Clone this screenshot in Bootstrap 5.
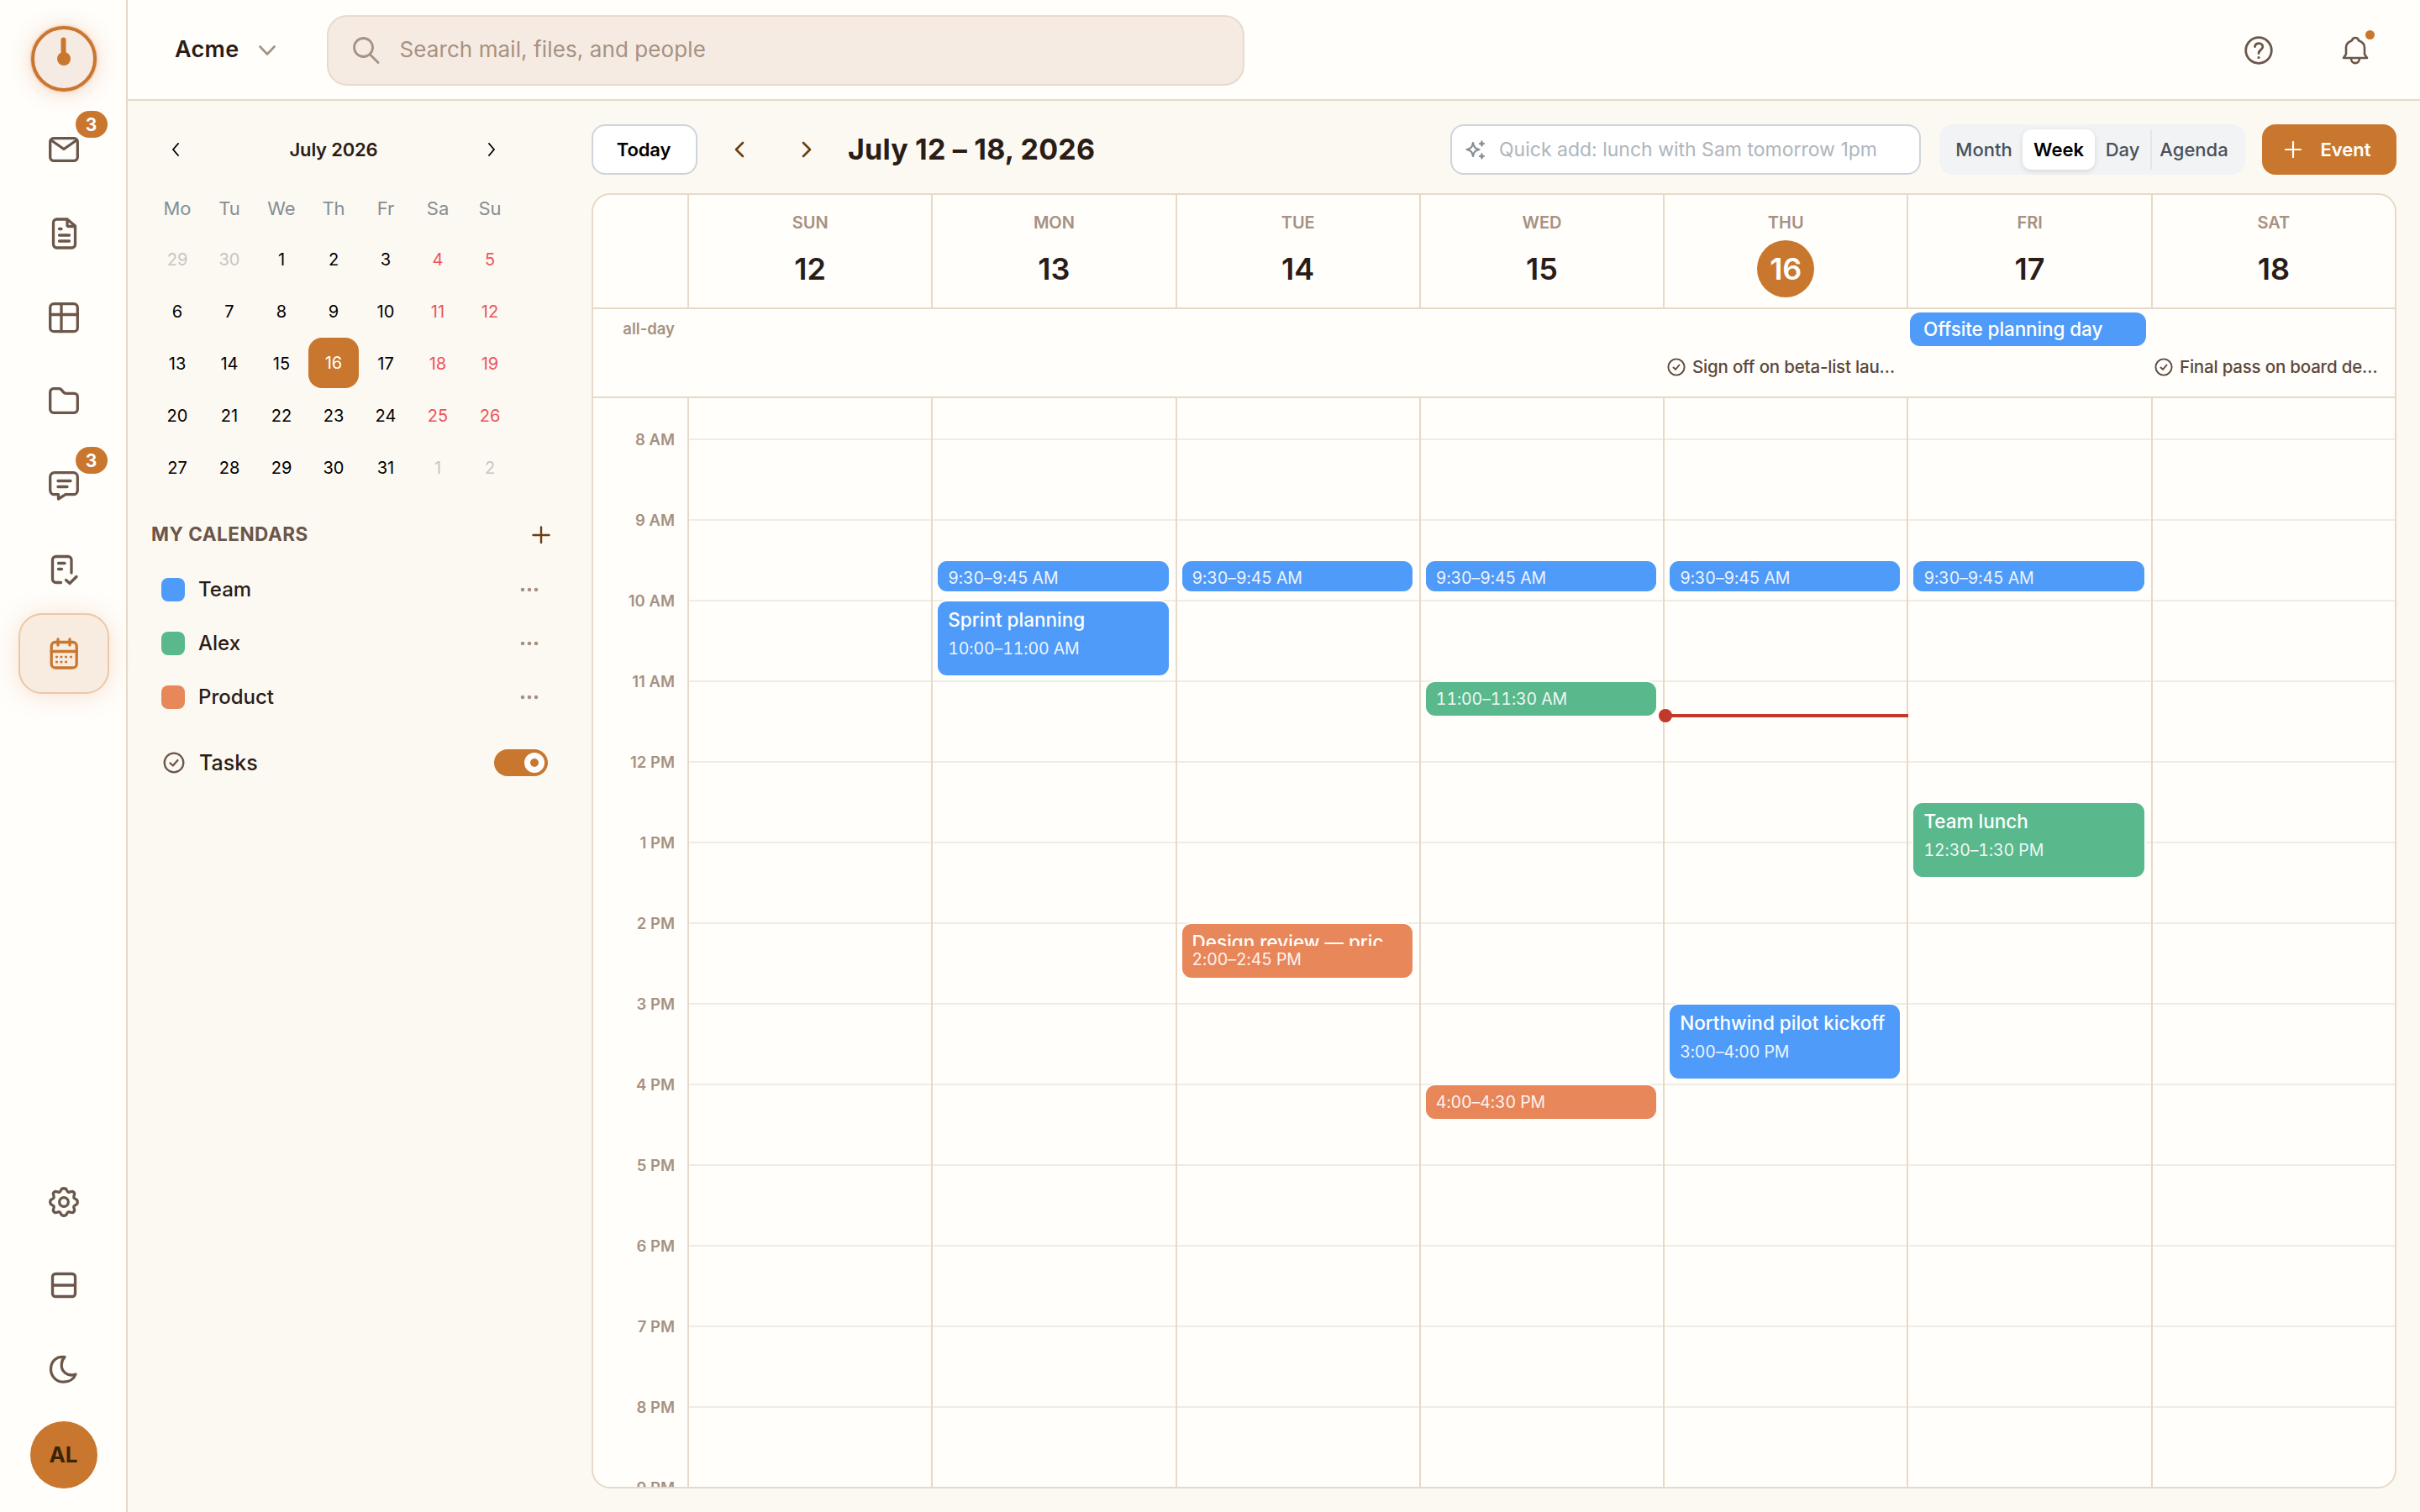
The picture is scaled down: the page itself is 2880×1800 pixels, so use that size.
<!DOCTYPE html>
<html lang="en">
<head>
<meta charset="utf-8">
<meta name="viewport" content="width=device-width, initial-scale=1">
<title>Acme Calendar</title>
<link href="https://cdn.jsdelivr.net/npm/bootstrap@5.3.0/dist/css/bootstrap.min.css" rel="stylesheet">
<style>
:root{--accent:#c9772e;--ink:#2a1c16;--brown:#6b564a;--muted:#a69182;--line:#e7d9c7;--paper:#fffefb;--canvas:#fcf9f3}
body{font-family:Inter,"Liberation Sans",sans-serif;font-size:22px;line-height:1;color:var(--ink);background:var(--canvas)}
svg{display:block;flex:none;fill:none;stroke:currentColor;stroke-linecap:round;stroke-linejoin:round}
.app-shell{width:2880px;height:1800px}
/* icon rail */
.rail{width:152px;background:var(--paper);border-right:2px solid var(--line);padding:31px 0 28px 1px;color:var(--brown)}
.brand-dial{width:78px;height:78px;border:4px solid var(--accent);background:#f6ebe3;box-shadow:0 2px 26px rgba(217,120,60,.3),0 0 3px rgba(217,120,60,.7);margin-bottom:21px;color:var(--accent)}
.rail-btn{width:108px;height:96px;border-radius:28px;border:2px solid transparent;margin-bottom:4px;color:var(--brown)}
.rail-btn.active{background:#f8ebe0;border-color:#ebc8a8;color:var(--accent);box-shadow:0 2px 30px rgba(217,120,60,.22)}
.rail-btn svg{stroke-width:3.3}
.count-pill{left:66px;top:0;width:38px;height:32px;border-radius:16px;background:var(--accent);color:#fff;font-size:21px;font-weight:700}
.avatar{width:80px;height:80px;background:var(--accent);color:#3a2408;font-size:26px;font-weight:700;margin-top:10px}
/* top bar */
.topbar{height:120px;background:var(--paper);border-bottom:2px solid var(--line);padding:1px 61px 0 56px}
.team-name{font-size:27px;font-weight:600;letter-spacing:.3px;margin-top:-2px}
.search-box{width:1092px;height:84px;border:2px solid #e8dace;border-radius:24px;background:#f5ebe3;color:var(--muted);font-size:26px;letter-spacing:.1px;padding-left:28px;margin-left:61px}
.search-box span{margin:-2px 0 0 22px}
.notice-dot{width:11px;height:11px;background:var(--accent);left:28px;top:-7px}
/* left panel */
.side-panel{width:552px;padding:28px 49px 0 28px}
.mini-cal{width:434px}
.mini-head{height:60px;font-weight:600;letter-spacing:-.2px;margin-bottom:8px}
.mini-grid{display:grid;grid-template-columns:repeat(7,62px);grid-auto-rows:62px;font-size:20px;color:#000}
.mini-grid span{display:flex;align-items:center;justify-content:center}
.mini-grid .wd{font-size:22px;color:#868e96;padding-top:2px}
.mini-grid .out{color:#c6c5c2}
.mini-grid .we{color:#ee5359}
.mini-grid .sel{background:var(--accent);color:#fff;border-radius:16px;margin:0 1px 2px}
.cal-title{height:40px;margin:28px 0 14px;font-size:22.5px;font-weight:700;letter-spacing:.5px;color:var(--brown)}
.cal-row{height:64px;font-size:24px;font-weight:500;padding-left:12px}
.swatch{width:28px;height:28px;border-radius:8px;margin-right:16px}
.dots{color:var(--muted);fill:currentColor;stroke:none;margin-right:14px}
.switch-on{width:64px;height:32px;border-radius:16px;background:var(--accent);padding-right:4px}
.switch-on i{width:24px;height:24px;border-radius:50%;background:var(--accent);border:7px solid #fff}
/* toolbar */
.main-area{padding:28px 28px 28px 0}
.tool-row{height:60px;margin-bottom:22px}
.today-btn{width:126px;border:2px solid #ced4da;border-radius:16px;background:#fff;color:#000;font-weight:600;margin-right:20px;letter-spacing:-.1px;padding-right:2px}
.step-btn{width:60px;margin-right:20px;color:#6b3f12}
.range-title{font-size:34px;font-weight:700;letter-spacing:.2px;margin-left:-1px}
.quick-add{width:560px;border:2px solid #ced4da;border-radius:16px;background:#fff;color:#adb5bd;font-size:23px;padding-left:15px;margin-right:22px}
.view-seg{width:364px;border-radius:16px;background:#f1f3f5;color:#495057;font-weight:500;padding:6px 8px 6px 7px;margin-right:20px}
.view-seg .on{background:#fff;color:#000;border-radius:10px;font-weight:600;box-shadow:0 2px 6px rgba(0,0,0,.12)}
.event-btn{width:160px;border-radius:16px;background:var(--accent);color:#fff;font-weight:600;padding-right:3px}
/* week grid */
.week-card{border:2px solid var(--line);border-radius:22px;background:var(--paper);overflow:hidden}
.gutter{width:114px;flex:none;border-right:2px solid var(--line);color:var(--muted);font-size:18.5px;font-weight:600}
.day-col{flex:1 1 0;min-width:0;border-right:2px solid var(--line)}
.day-col:last-child{border-right:0}
.head-row{height:136px;border-bottom:2px solid var(--line)}
.dow{height:30px;margin:18px 0 6px;font-size:20px;font-weight:600;color:var(--muted)}
.dnum{width:68px;height:68px;font-size:36px;font-weight:600}
.dnum.now{background:var(--accent);color:#fff}
.allday-row{height:106px;border-bottom:2px solid var(--line)}
.allday-row .gutter{border-color:transparent}
.allday-grid{display:grid;grid-template-columns:repeat(7,minmax(0,1fr));grid-template-rows:40px 40px;row-gap:5px;padding-top:4px}
.allday-ev{margin:0 6px 0 3px;border-radius:12px;background:#4f9bf9;color:#fff;font-size:22.5px;font-weight:500;padding-left:16px;letter-spacing:-.1px}
.allday-task{font-size:20.5px;font-weight:500;color:#5c483d;padding-left:4px;letter-spacing:-.2px;white-space:nowrap}
.hours div{height:96px;padding-right:15px;text-align:right;line-height:98px}
.days{background:repeating-linear-gradient(#efece4 0 2px,transparent 2px 96px) 0 48px/100% 1400px no-repeat}
.ev{position:absolute;left:6px;right:8px;border-radius:11px;color:#fff;padding:6px 12px 0;overflow:hidden;white-space:nowrap;box-shadow:0 0 0 2px var(--paper)}
.ev b{display:block;font-size:22.5px;font-weight:500;line-height:32px;height:34px;margin-bottom:2px;overflow:hidden}
.ev span{display:block;font-size:19.5px;line-height:29px;opacity:.9;font-variant-numeric:tabular-nums;letter-spacing:-.1px}
.blue{background:#4f9bf9}.green{background:#5ab88d}.coral{background:#e8875a}
.now-line{position:absolute;left:0;right:-2px;top:376px;height:4px;background:#c0392b;z-index:2}
.now-line::before{content:"";position:absolute;left:-7px;top:-6px;width:16px;height:16px;border-radius:50%;background:#c0392b}
</style>
</head>
<body>
<div class="app-shell d-flex overflow-hidden">

<nav class="rail d-flex flex-column align-items-center flex-shrink-0">
  <div class="brand-dial rounded-circle d-flex align-items-center justify-content-center">
    <svg width="70" height="70" viewBox="0 0 70 70"><path d="M34.5 12.5V30" stroke-width="6"/><circle cx="35" cy="35" r="8" fill="currentColor" stroke="none"/></svg>
  </div>
  <div class="rail-btn position-relative d-flex align-items-center justify-content-center">
    <svg width="40" height="40"><rect x="3.7" y="6.7" width="32.6" height="26.6" rx="4"/><path d="M5 9l15 10.500L35 9"/></svg>
    <span class="count-pill position-absolute d-flex align-items-center justify-content-center">3</span>
  </div>
  <div class="rail-btn d-flex align-items-center justify-content-center">
    <svg width="40" height="40"><path d="M24 3H11.500A4 4 0 0 0 7.500 7v26a4 4 0 0 0 4 4h18a4 4 0 0 0 4-4V11zM24 3v7a1.500 1.500 0 0 0 1.500 1.500h8M14.500 14.500h2.500M14.500 22h12M14.500 29h12"/></svg>
  </div>
  <div class="rail-btn d-flex align-items-center justify-content-center">
    <svg width="40" height="40"><rect x="3.700" y="3.700" width="32.600" height="33" rx="4.500"/><path d="M3.700 16.500h32.600M17 3.700v33"/></svg>
  </div>
  <div class="rail-btn d-flex align-items-center justify-content-center">
    <svg width="40" height="40"><path d="M7.700 4.700h6.500a4 4 0 0 1 3 1.400l2.300 2.800a4 4 0 0 0 3 1.400h9.800a4 4 0 0 1 4 4v15a4 4 0 0 1-4 4H7.700a4 4 0 0 1-4-4V8.700a4 4 0 0 1 4-4z"/></svg>
  </div>
  <div class="rail-btn position-relative d-flex align-items-center justify-content-center">
    <svg width="40" height="40"><path d="M8.700 4.700h22.600a5 5 0 0 1 5 5v16a5 5 0 0 1-5 5H22L13.500 36v-5.300H8.700a5 5 0 0 1-5-5v-16a5 5 0 0 1 5-5zM13 14.500h15M13 21.500h11"/></svg>
    <span class="count-pill position-absolute d-flex align-items-center justify-content-center">3</span>
  </div>
  <div class="rail-btn d-flex align-items-center justify-content-center">
    <svg width="40" height="40"><path d="M16.500 35.500h-6a4 4 0 0 1-4-4v-23a4 4 0 0 1 4-4H25a4 4 0 0 1 4 4V24M13.500 12.500h7.500M13.500 19.500h4M22.500 32.500l4.500 4 8-8"/></svg>
  </div>
  <div class="rail-btn active d-flex align-items-center justify-content-center">
    <svg width="40" height="40"><rect x="5.200" y="6.500" width="30" height="30.500" rx="4.500"/><path d="M5.200 17.500h30M13 3v7M27 3v7"/><g fill="currentColor" stroke="none"><circle cx="11.500" cy="24" r="1.600"/><circle cx="17" cy="24" r="1.600"/><circle cx="22.500" cy="24" r="1.600"/><circle cx="28.500" cy="24" r="1.600"/><circle cx="11.500" cy="30" r="1.600"/><circle cx="17" cy="30" r="1.600"/><circle cx="22.500" cy="30" r="1.600"/></g></svg>
  </div>
  <div class="rail-btn mt-auto d-flex align-items-center justify-content-center">
    <svg width="40" height="40" viewBox="-20 -21 40 40"><path d="M-3.500 -14C-2.500 -17 2.500 -17 3.500 -14C4.500 -11.500 5.800 -11.300 8 -12.300C11 -13.500 13.500 -11 12.300 -8C11.300 -5.800 11.500 -4.500 14 -3.500C17 -2.500 17 2.500 14 3.500C11.500 4.500 11.300 5.800 12.300 8C13.500 11 11 13.500 8 12.300C5.800 11.300 4.500 11.500 3.500 14C2.500 17 -2.500 17 -3.500 14C-4.500 11.500 -5.800 11.300 -8 12.300C-11 13.500 -13.500 11 -12.300 8C-11.300 5.800 -11.500 4.500 -14 3.500C-17 2.500 -17 -2.500 -14 -3.500C-11.500 -4.500 -11.300 -5.800 -12.300 -8C-13.500 -11 -11 -13.500 -8 -12.300C-5.800 -11.300 -4.500 -11.500 -3.500 -14Z"/><circle r="5.300"/></svg>
  </div>
  <div class="rail-btn d-flex align-items-center justify-content-center">
    <svg width="40" height="40"><rect x="6.500" y="6.500" width="27" height="27" rx="3.500"/><path d="M6.500 20h27"/></svg>
  </div>
  <div class="rail-btn d-flex align-items-center justify-content-center">
    <svg width="40" height="40"><path d="M21 5.500C10 4 4.500 12 4.500 20a15 15 0 0 0 15.200 15.200C26.500 35.200 32 31.500 34 26C24 29.500 16.500 22.500 17.300 14C17.500 10.500 19 7.500 21 5.500z"/></svg>
  </div>
  <div class="avatar rounded-circle d-flex align-items-center justify-content-center flex-shrink-0">AL</div>
</nav>

<div class="flex-grow-1 d-flex flex-column">
  <header class="topbar d-flex align-items-center flex-shrink-0">
    <span class="team-name">Acme</span>
    <svg class="ms-4" width="20" height="20" stroke-width="2.600" style="color:#a69182"><path d="M1.500 5.500L10 14.500l8.500-9"/></svg>
    <div class="search-box d-flex align-items-center">
      <svg width="34" height="34" stroke-width="2.800"><circle cx="13.500" cy="13.500" r="11"/><path d="M21.500 22L31 31.500"/></svg>
      <span>Search mail, files, and people</span>
    </div>
    <div class="ms-auto d-flex align-items-center" style="color:#6b564a;gap:82px">
      <svg width="34" height="34" stroke-width="2.800"><circle cx="17" cy="17" r="15.300"/><path d="M12.500 12.500c.8-5.500 9.800-5 9.300.3-.3 3.400-4.800 4-4.800 7.700"/><circle cx="17" cy="25.500" r="1.600" fill="currentColor" stroke="none"/></svg>
      <div class="position-relative">
        <svg width="32" height="34" stroke-width="2.600"><path d="M2 26h28l-3-4.500V13.500C27 9 23.500 6.500 20 5.200C19 1 13 1 12 5.200C8.500 6.500 5 9 5 13.500v8zM11 26.500c0 7.500 10 7.500 10 0"/></svg>
        <span class="notice-dot position-absolute rounded-circle"></span>
      </div>
    </div>
  </header>

  <div class="flex-grow-1 d-flex" style="min-height:0">
    <aside class="side-panel flex-shrink-0">
      <div class="mini-cal">
        <div class="mini-head d-flex align-items-center justify-content-between px-4">
          <svg width="10" height="16" stroke-width="1.900" style="color:#000"><path d="M8 1L2 8l6 7"/></svg>
          <span>July 2026</span>
          <svg width="10" height="16" stroke-width="1.900" style="color:#000"><path d="M2 1l6 7-6 7"/></svg>
        </div>
        <div class="mini-grid">
          <span class="wd">Mo</span><span class="wd">Tu</span><span class="wd">We</span><span class="wd">Th</span><span class="wd">Fr</span><span class="wd">Sa</span><span class="wd">Su</span>
          <span class="out">29</span><span class="out">30</span><span>1</span><span>2</span><span>3</span><span class="we">4</span><span class="we">5</span>
          <span>6</span><span>7</span><span>8</span><span>9</span><span>10</span><span class="we">11</span><span class="we">12</span>
          <span>13</span><span>14</span><span>15</span><span class="sel">16</span><span>17</span><span class="we">18</span><span class="we">19</span>
          <span>20</span><span>21</span><span>22</span><span>23</span><span>24</span><span class="we">25</span><span class="we">26</span>
          <span>27</span><span>28</span><span>29</span><span>30</span><span>31</span><span class="out">1</span><span class="out">2</span>
        </div>
      </div>
      <div class="cal-title d-flex align-items-center justify-content-between">
        <span>MY CALENDARS</span>
        <svg width="22" height="22" stroke-width="2.400" style="color:#6b3f12"><path d="M11 2.500v19M1.500 12h19"/></svg>
      </div>
      <div class="cal-row d-flex align-items-center"><span class="swatch blue"></span>Team<svg class="dots ms-auto" width="22" height="6"><circle cx="3" cy="3" r="2.300"/><circle cx="11" cy="3" r="2.300"/><circle cx="19" cy="3" r="2.300"/></svg></div>
      <div class="cal-row d-flex align-items-center"><span class="swatch green"></span>Alex<svg class="dots ms-auto" width="22" height="6"><circle cx="3" cy="3" r="2.300"/><circle cx="11" cy="3" r="2.300"/><circle cx="19" cy="3" r="2.300"/></svg></div>
      <div class="cal-row d-flex align-items-center"><span class="swatch coral"></span>Product<svg class="dots ms-auto" width="22" height="6"><circle cx="3" cy="3" r="2.300"/><circle cx="11" cy="3" r="2.300"/><circle cx="19" cy="3" r="2.300"/></svg></div>
      <div class="cal-row d-flex align-items-center" style="margin-top:14px;padding-left:14px;font-size:25px">
        <svg width="26" height="26" stroke-width="2.300" style="color:#6b564a;margin-right:17px"><circle cx="13" cy="13" r="11.300"/><path d="M8.500 13.500l3.300 3 5.700-6.500"/></svg>Tasks
        <span class="switch-on ms-auto d-flex align-items-center justify-content-end" style="margin-right:3px"><i></i></span>
      </div>
    </aside>

    <main class="main-area flex-grow-1 d-flex flex-column">
      <div class="tool-row d-flex align-items-stretch flex-shrink-0">
        <div class="today-btn d-flex align-items-center justify-content-center">Today</div>
        <div class="step-btn d-flex align-items-center justify-content-center"><svg width="14" height="20" stroke-width="2.600"><path d="M11 2L3 10l8 8"/></svg></div>
        <div class="step-btn d-flex align-items-center justify-content-center"><svg width="14" height="20" stroke-width="2.600"><path d="M3 2l8 8-8 8"/></svg></div>
        <div class="range-title d-flex align-items-center">July 12 – 18, 2026</div>
        <div class="quick-add d-flex align-items-center ms-auto">
          <svg width="26" height="24" stroke-width="2.200" style="color:#868e96"><path d="M10 4c.8 5 2.500 7 7.500 8-5 1-6.700 3-7.500 8-.8-5-2.500-7-7.500-8 5-1 6.700-3 7.500-8z"/><path d="M20.500 1.500l1.100 2.400 2.400 1.100-2.400 1.100-1.100 2.400-1.100-2.400L17 5l2.400-1.100zM20.500 16.500l1.100 2.400L24 20l-2.400 1.100-1.100 2.400-1.100-2.400L17 20l2.400-1.100z" fill="currentColor" stroke-width="1"/></svg>
          <span style="margin-left:15px">Quick add: lunch with Sam tomorrow 1pm</span>
        </div>
        <div class="view-seg d-flex">
          <span class="d-flex align-items-center justify-content-center" style="width:92px">Month</span>
          <span class="on d-flex align-items-center justify-content-center" style="width:86px">Week</span>
          <span class="d-flex align-items-center justify-content-center" style="width:66px">Day</span>
          <span class="d-flex align-items-center justify-content-center" style="width:102px;border-left:2px solid #e3e6ea">Agenda</span>
        </div>
        <div class="event-btn d-flex align-items-center justify-content-center">
          <svg width="20" height="20" stroke-width="2.200" style="margin-right:22px"><path d="M10 1v18M1 10h18"/></svg>Event
        </div>
      </div>

      <section class="week-card flex-grow-1 d-flex flex-column">
        <div class="head-row d-flex flex-shrink-0">
          <div class="gutter"></div>
          <div class="day-col d-flex flex-column align-items-center"><span class="dow d-flex align-items-center">SUN</span><span class="dnum d-flex align-items-center justify-content-center">12</span></div>
          <div class="day-col d-flex flex-column align-items-center"><span class="dow d-flex align-items-center">MON</span><span class="dnum d-flex align-items-center justify-content-center">13</span></div>
          <div class="day-col d-flex flex-column align-items-center"><span class="dow d-flex align-items-center">TUE</span><span class="dnum d-flex align-items-center justify-content-center">14</span></div>
          <div class="day-col d-flex flex-column align-items-center"><span class="dow d-flex align-items-center">WED</span><span class="dnum d-flex align-items-center justify-content-center">15</span></div>
          <div class="day-col d-flex flex-column align-items-center"><span class="dow d-flex align-items-center">THU</span><span class="dnum now rounded-circle d-flex align-items-center justify-content-center">16</span></div>
          <div class="day-col d-flex flex-column align-items-center"><span class="dow d-flex align-items-center">FRI</span><span class="dnum d-flex align-items-center justify-content-center">17</span></div>
          <div class="day-col d-flex flex-column align-items-center"><span class="dow d-flex align-items-center">SAT</span><span class="dnum d-flex align-items-center justify-content-center">18</span></div>
        </div>
        <div class="allday-row d-flex flex-shrink-0">
          <div class="gutter text-end" style="padding:14px 15px 0 0">all-day</div>
          <div class="allday-grid flex-grow-1">
            <div class="allday-ev d-flex align-items-center" style="grid-area:1/6">Offsite planning day</div>
            <div class="allday-task d-flex align-items-center" style="grid-area:2/5"><svg width="22" height="22" stroke-width="1.900" style="margin-right:8px"><circle cx="11" cy="11" r="9.600"/><path d="M7.500 11.500l2.500 2.300 4.500-5.300"/></svg>Sign off on beta-list lau…</div>
            <div class="allday-task d-flex align-items-center" style="grid-area:2/7"><svg width="22" height="22" stroke-width="1.900" style="margin-right:8px"><circle cx="11" cy="11" r="9.600"/><path d="M7.500 11.500l2.500 2.300 4.500-5.300"/></svg>Final pass on board de…</div>
          </div>
        </div>
        <div class="flex-grow-1 d-flex overflow-hidden" style="height:0">
          <div class="gutter hours"><div>8 AM</div><div>9 AM</div><div>10 AM</div><div>11 AM</div><div>12 PM</div><div>1 PM</div><div>2 PM</div><div>3 PM</div><div>4 PM</div><div>5 PM</div><div>6 PM</div><div>7 PM</div><div>8 PM</div><div>9 PM</div></div>
          <div class="days d-flex flex-grow-1">
            <div class="day-col"></div>
            <div class="day-col position-relative">
              <div class="ev blue" style="top:194px;height:36px"><span>9:30–9:45 AM</span></div>
              <div class="ev blue" style="top:242px;height:88px"><b>Sprint planning</b><span>10:00–11:00 AM</span></div>
            </div>
            <div class="day-col position-relative">
              <div class="ev blue" style="top:194px;height:36px"><span>9:30–9:45 AM</span></div>
              <div class="ev coral" style="top:626px;height:64px"><b style="height:20px">Design review — pric</b><span>2:00–2:45 PM</span></div>
            </div>
            <div class="day-col position-relative">
              <div class="ev blue" style="top:194px;height:36px"><span>9:30–9:45 AM</span></div>
              <div class="ev green" style="top:338px;height:40px"><span>11:00–11:30 AM</span></div>
              <div class="ev coral" style="top:818px;height:40px"><span>4:00–4:30 PM</span></div>
            </div>
            <div class="day-col position-relative">
              <div class="ev blue" style="top:194px;height:36px"><span>9:30–9:45 AM</span></div>
              <div class="now-line"></div>
              <div class="ev blue" style="top:722px;height:88px"><b>Northwind pilot kickoff</b><span>3:00–4:00 PM</span></div>
            </div>
            <div class="day-col position-relative">
              <div class="ev blue" style="top:194px;height:36px"><span>9:30–9:45 AM</span></div>
              <div class="ev green" style="top:482px;height:88px"><b>Team lunch</b><span>12:30–1:30 PM</span></div>
            </div>
            <div class="day-col"></div>
          </div>
        </div>
      </section>
    </main>
  </div>
</div>
</div>
<script src="https://cdn.jsdelivr.net/npm/bootstrap@5.3.0/dist/js/bootstrap.bundle.min.js"></script>
</body>
</html>
